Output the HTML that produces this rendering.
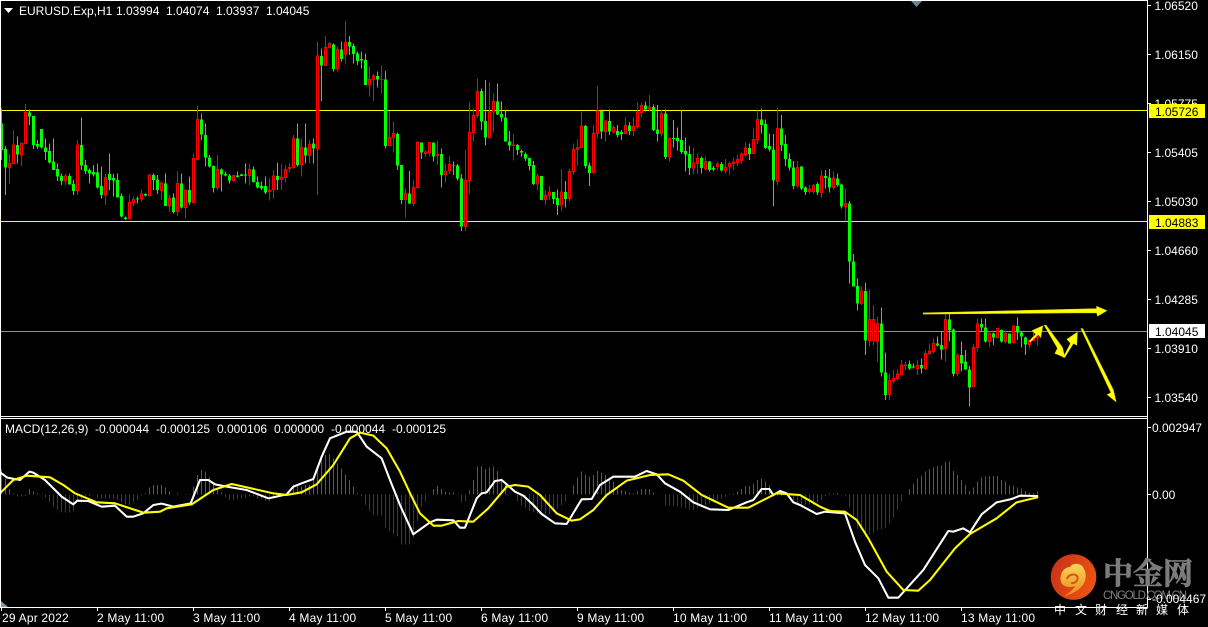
<!DOCTYPE html>
<html><head><meta charset="utf-8"><title>EURUSD.Exp,H1</title>
<style>
html,body{margin:0;padding:0;background:#000;width:1208px;height:627px;overflow:hidden}
svg{display:block;position:absolute;left:0;top:0}
text{font-family:"Liberation Sans",sans-serif;font-size:12px;fill:#fff}
.c{shape-rendering:crispEdges;fill:none}
.gw{stroke:#0f0;stroke-width:3}
.gb{stroke:#0f0;stroke-width:9}
.rw{stroke:#f00;stroke-width:3}
.rb{stroke:#f00;stroke-width:3;fill:#000}
.hr{stroke:#bb2748;stroke-width:3}
.hg{stroke:#0a5c0a;stroke-width:3}
.l{fill:none;stroke-width:6.200;stroke-linejoin:round;stroke-linecap:round}
</style></head><body>
<svg width="1208" height="627" viewBox="0 0 1208 627" xmlns="http://www.w3.org/2000/svg">
<defs>
<linearGradient id="cg" x1="0" y1="0" x2="1" y2="0.4"><stop offset="0" stop-color="#c42f18"/><stop offset="1" stop-color="#ea5210"/></linearGradient>
<linearGradient id="yg" x1="0" y1="0" x2="0" y2="1"><stop offset="0" stop-color="#f8d458"/><stop offset="1" stop-color="#ee8a1e"/></linearGradient>
</defs>
<rect width="1208" height="627" fill="#000"/>
<g class="c">
<path d="M1 110.5H1147" stroke="#ff0" stroke-width="1"/>
<path d="M1 221.5H1147" stroke="#ff0" stroke-width="1"/>
<path d="M1 331.5H1147" stroke="#909090" stroke-width="1"/>
</g>

<g transform="translate(0.167,0) scale(.33333)" class="c">
<path class="gw" d="M4 325V480M16 438V585M52 410V490M88 328V375M100 348V447M112 420V447M124 387V445M136 415V480M148 430V490M160 415V510M172 490V543M184 520V555M208 520V553M220 540V585M244 353V510M256 480V522M268 505V550M280 495V530M292 490V565M304 500V595M328 460V570M340 522V590M352 520V590M364 580V652M376 650V660M412 590V610M436 580V590M460 520V570M472 525V582M496 520V618M520 580V640M544 520V625M568 530V615M604 340V420M616 370V500M628 465V502M640 497V578M664 505V575M676 515V530M688 522V550M712 515V533M724 520V528M736 490V550M760 500V548M772 530V565M784 545V570M796 530V582M832 488V570M892 370V500M916 370V490M940 415V490M964 145V303M1000 130V215M1024 125V185M1048 108V165M1060 130V190M1072 155V195M1084 155V205M1096 160V255M1132 215V262M1156 213V445M1192 398V510"/>
<path class="gb" d="M4 370V450M16 447V503M52 435V463M88 337V350M100 348V435M112 432V440M124 387V442M136 442V456M148 453V488M160 485V510M172 507V530M184 528V543M208 528V553M220 552V573M244 435V497M256 495V513M268 510V520M280 516V523M292 518V562M304 558V585M328 522V540M340 534V542M352 540V592M364 588V650M376 652V657M412 595V599M436 582V586M460 525V540M472 538V570M496 550V618M520 592V636M544 550V623M568 570V608M604 358V404M616 405V473M628 472V500M640 498V564M664 508V524M676 522V527M688 526V542M712 526V531M724 524V528M736 524V527M760 508V546M772 546V562M784 558V565M796 558V578M832 528V540M892 415V495M916 442V467M940 430V446M964 168V197M1000 133V207M1024 148V177M1048 126V140M1060 138V162M1072 160V183M1084 177V182M1096 180V255M1132 228V238M1156 238V438M1192 402V497"/>
<path class="rw" d="M28 462V552M40 390V490M64 428V498M76 312V432M196 520V555M232 420V585M316 520V615M388 582V658M400 590V620M424 568V605M448 522V590M484 545V600M508 585V635M532 515V648M556 570V655M580 460V610M592 318V480M652 465V570M700 525V545M748 492V555M808 535V602M820 510V595M844 492V570M856 495V548M868 490V518M880 405V505M904 415V530M928 420V490M952 125V585M976 108V190M988 128V145M1012 140V215M1036 63V190M1108 200V290M1120 222V305M1144 198V280M1168 333V437M1180 365V458"/>
<path class="rb" d="M25 490H31V503H25ZM37 435H43V490H37ZM61 430H67V465H61ZM73 337H79V430H73ZM193 528H199V543H193ZM229 435H235V572H229ZM313 532H319V585H313ZM385 607H391V657H385ZM397 598H403V608H397ZM421 582H427V597H421ZM445 525H451V587H445ZM481 549H487V572H481ZM505 595H511V618H505ZM529 550H535V635H529ZM553 570H559V623H553ZM577 475H583V608H577ZM589 358H595V478H589ZM649 508H655V563H649ZM697 527H703V542H697ZM745 508H751V526H745ZM805 570H811V575H805ZM817 528H823V569H817ZM841 532H847V538H841ZM853 508H859V532H853ZM865 502H871V506H865ZM877 415H883V503H877ZM901 442H907V494H901ZM925 433H931V467H925ZM949 168H955V446H949ZM973 142H979V197H973ZM985 130H991V142H985ZM1009 148H1015V207H1009ZM1033 127H1039V162H1033ZM1105 238H1111V255H1105ZM1117 228H1123V238H1117ZM1141 238H1147V239H1141ZM1165 412H1171V437H1165ZM1177 400H1183V412H1177Z"/>
</g>

<g transform="translate(400.167,60) scale(.33333)" class="c">
<path class="gw" d="M4 315V432M28 333V432M64 247V297M100 247V305M124 265V383M160 305V345M172 312V362M184 342V513M244 85V210M256 60V257M292 70V165M304 125V185M316 150V245M328 213V272M352 252V285M364 268V290M376 277V303M388 292V332M400 303V375M424 348V420M460 396V432M472 388V465M496 363V442M556 195V325M568 308V378M604 148V237M628 148V225M652 195V233M664 210V240M688 186V225M736 124V155M760 133V213M772 135V245M796 148V297M820 180V262M832 202V272M844 150V282M856 232V335M868 258V345M904 290V340M928 303V335M940 318V333M964 306V334M1048 250V300M1084 145V220M1096 178V267M1108 220V275M1120 222V438M1144 165V273M1156 225V318M1168 280V332M1180 303V387"/>
<path class="gb" d="M4 315V420M28 400V430M64 247V278M100 247V290M124 282V345M160 315V317M172 316V356M184 355V500M244 93V185M256 183V233M292 124V164M304 162V173M316 172V245M328 244V257M352 255V270M364 273V278M376 282V296M388 294V318M400 315V372M424 348V420M460 396V417M472 414V435M496 396V417M556 198V318M568 316V339M604 153V215M628 183V215M652 213V225M664 216V222M688 196V213M736 136V148M760 141V210M772 208V222M796 160V291M820 234V237M832 234V243M844 240V276M856 273V284M868 282V324M904 294V324M928 304V330M940 324V329M964 312V332M1048 264V282M1084 178V195M1096 192V264M1108 258V268M1120 268V362M1144 205V255M1156 252V297M1168 297V323M1180 322V378"/>
<path class="rw" d="M16 385V473M40 360V438M52 243V385M76 270V290M88 247V290M112 243V315M136 310V368M148 288V342M196 270V513M208 126V400M220 145V245M232 55V172M268 66V235M280 100V218M340 222V302M412 340V392M436 392V435M448 378V420M484 327V453M508 325V425M520 250V345M532 237V318M544 155V265M580 197V340M592 78V232M616 180V245M640 197V220M676 172V222M700 172V228M712 128V205M724 127V172M748 105V155M784 150V230M808 232V305M880 262V342M892 280V342M916 290V332M952 305V332M976 297V340M988 305V345M1000 293V330M1012 285V318M1024 278V312M1036 246V290M1060 205V282M1072 152V252M1132 142V375M1192 303V383"/>
<path class="rb" d="M13 400H19V418H13ZM37 382H43V430H37ZM49 247H55V382H49ZM73 276H79V280H73ZM85 248H91V277H85ZM109 283H115V287H109ZM133 334H139V344H133ZM145 313H151V332H145ZM193 362H199V500H193ZM205 217H211V362H205ZM217 166H223V217H217ZM229 94H235V166H229ZM265 156H271V233H265ZM277 124H283V156H277ZM337 255H343V257H337ZM409 348H415V372H409ZM433 406H439V418H433ZM445 396H451V406H445ZM481 396H487V435H481ZM505 334H511V416H505ZM517 268H523V334H517ZM529 262H535V269H529ZM541 198H547V262H541ZM577 220H583V338H577ZM589 153H595V220H589ZM613 183H619V215H613ZM637 202H643V216H637ZM673 196H679V221H673ZM697 199H703V212H697ZM709 156H715V200H709ZM721 136H727V158H721ZM745 142H751V147H745ZM781 160H787V221H781ZM805 235H811V291H805ZM877 309H883V324H877ZM889 295H895V310H889ZM913 304H919V326H913ZM949 312H955V320H949ZM973 322H979V332H973ZM985 310H991V320H985ZM997 306H1003V311H997ZM1009 298H1015V308H1009ZM1021 282H1027V302H1021ZM1033 264H1039V284H1033ZM1057 238H1063V281H1057ZM1069 178H1075V240H1069ZM1129 205H1135V365H1129ZM1189 322H1195V378H1189Z"/>
</g>

<g transform="translate(800.167,90) scale(.33333)" class="c">
<path class="gw" d="M4 228V300M16 290V315M52 278V315M76 240V295M88 237V308M112 250V290M124 280V355M148 333V580M160 492V590M172 565V662M196 577V795M244 652V860M256 787V930M328 812V840M340 820V835M364 805V850M412 740V770M424 725V808M448 670V755M460 715V860M484 755V845M496 780V840M508 828V950M544 685V725M556 685V758M580 728V765M604 718V758M628 730V760M652 682V750M664 725V772M676 740V795"/>
<path class="gb" d="M4 230V295M16 292V306M52 282V308M76 258V264M88 262V293M112 265V285M124 283V350M148 340V515M160 514V590M172 588V640M196 603V752M244 700V848M256 847V915M328 822V836M340 830V833M364 825V836M412 760V767M424 765V778M448 688V720M460 718V852M484 795V820M496 815V838M508 838V892M544 702V712M556 712V755M580 730V743M604 720V755M628 730V760M652 708V727M664 727V740M676 742V764"/>
<path class="rw" d="M28 285V310M40 282V312M64 240V323M100 245V300M136 295V395M184 590V645M208 598V770M220 645V765M232 680V815M268 850V930M280 840V880M292 838V870M304 810V855M316 815V840M352 810V855M376 782V840M388 760V795M400 745V790M436 670V815M472 790V858M520 762V892M532 685V785M568 725V772M592 715V745M616 722V760M640 705V760M688 750V775M700 725V752M712 738V768"/>
<path class="rb" d="M25 297H31V305H25ZM37 286H43V305H37ZM61 258H67V308H61ZM97 264H103V292H97ZM133 340H139V350H133ZM181 603H187V640H181ZM205 688H211V752H205ZM217 688H223V752H217ZM229 700H235V755H229ZM265 872H271V914H265ZM277 865H283V873H277ZM289 852H295V866H289ZM301 825H307V853H301ZM313 825H319V827H313ZM349 826H355V835H349ZM373 790H379V835H373ZM385 783H391V790H385ZM397 760H403V785H397ZM433 688H439V775H433ZM469 795H475V850H469ZM517 772H523V890H517ZM529 702H535V772H529ZM565 730H571V755H565ZM589 716H595V742H589ZM613 730H619V755H613ZM637 708H643V757H637ZM685 752H691V764H685ZM697 742H703V752H697ZM709 738H715V744H709Z"/>
</g>

<!-- MACD histogram -->
<g transform="translate(0.167,415) scale(.33333)" class="c">
<path class="hr" d="M4 238V162M16 238V190M28 238V222M40 238V235M88 238V222M100 238V230M112 238V236M436 238V236M448 238V218M460 238V210M472 238V210M484 238V210M496 238V218M508 238V228M532 238V235M556 238V237M568 238V237M580 238V215M592 238V180M604 238V165M616 238V170M628 238V188M640 238V202M652 238V222M664 238V232M868 238V235M880 238V208M892 238V208M904 238V215M916 238V210M928 238V208M940 238V190M952 238V160M964 238V125M976 238V120M988 238V117M1000 238V130M1012 238V145M1024 238V160M1036 238V178M1048 238V195M1060 238V215M1072 238V236"/>
<path class="hg" d="M52 238V245M64 238V245M76 238V243M136 238V248M148 238V262M160 238V275M172 238V285M184 238V292M196 238V292M208 238V292M220 238V290M232 238V260M244 238V252M256 238V245M268 238V243M280 238V240M292 238V248M304 238V250M316 238V250M328 238V250M340 238V250M352 238V255M364 238V262M376 238V268M388 238V270M400 238V262M412 238V255M424 238V242M676 238V248M688 238V255M700 238V255M712 238V252M724 238V250M736 238V248M748 238V244M760 238V244M772 238V250M784 238V252M796 238V258M808 238V258M820 238V250M832 238V242M1084 238V245M1096 238V270M1108 238V288M1120 238V298M1132 238V302M1144 238V302M1156 238V338M1168 238V348M1180 238V358M1192 238V365"/>
</g>
<g transform="translate(400.167,415) scale(.33333)" class="c">
<path class="hr" d="M100 238V222M112 238V213M124 238V222M136 238V230M148 238V232M160 238V232M208 238V225M220 238V195M232 238V155M244 238V153M256 238V162M268 238V158M280 238V155M292 238V168M304 238V190M316 238V208M520 238V212M532 238V188M544 238V170M556 238V178M568 238V185M580 238V180M592 238V168M604 238V172M616 238V180M628 238V190M640 238V200M652 238V215M664 238V225M676 238V228M688 238V232M700 238V235M712 238V228M724 238V222M736 238V222M748 238V222M760 238V232M988 238V237M1000 238V236M1012 238V230M1024 238V222M1036 238V213M1048 238V213M1060 238V205M1072 238V195M1084 238V190M1096 238V200M1108 238V212M1120 238V235"/>
<path class="hg" d="M4 238V388M16 238V388M28 238V388M40 238V368M52 238V318M64 238V275M76 238V260M184 238V262M196 238V258M352 238V258M364 238V272M376 238V278M388 238V288M400 238V292M412 238V295M424 238V290M436 238V298M448 238V298M460 238V290M472 238V280M484 238V270M496 238V260M784 238V240M796 238V270M808 238V272M820 238V272M832 238V275M844 238V278M856 238V280M868 238V285M880 238V285M892 238V280M904 238V278M916 238V272M928 238V265M940 238V262M952 238V255M964 238V250M976 238V245M1132 238V245M1144 238V243M1156 238V240M1168 238V248M1180 238V262M1192 238V270"/>
</g>
<g transform="translate(800.167,415) scale(.33333)" class="c">
<path class="hr" d="M88 238V236M100 238V236M112 238V234M124 238V237M328 238V222M340 238V205M352 238V190M364 238V182M376 238V170M388 238V162M400 238V157M412 238V153M424 238V152M436 238V141M448 238V140M460 238V168M472 238V180M484 238V195M496 238V210M508 238V228M520 238V218M532 238V200M544 238V188M556 238V185M568 238V183M580 238V183M592 238V183M604 238V195M616 238V200M628 238V212M640 238V212M652 238V217M664 238V220M676 238V228M688 238V233M700 238V234M712 238V230"/>
<path class="hg" d="M4 238V270M16 238V270M28 238V268M40 238V270M52 238V262M64 238V255M76 238V245M136 238V245M148 238V278M160 238V310M172 238V340M184 238V345M196 238V368M208 238V358M220 238V352M232 238V345M244 238V342M256 238V338M268 238V325M280 238V308M292 238V285M304 238V260"/>
</g>

<!-- MACD text -->
<text x="5" y="433">MACD(12,26,9)</text>
<text x="95" y="433">-0.000044</text>
<text x="156" y="433">-0.000125</text>
<text x="217" y="433">0.000106</text>
<text x="274" y="433">0.000000</text>
<text x="331" y="433">-0.000044</text>
<text x="392" y="433">-0.000125</text>

<!-- MACD lines -->
<g transform="scale(.33333) translate(0,1245)">
<polyline class="l" stroke="#fff" points="0,172 22,188 60,195 88,170 100,173 135,195 185,245 220,268 232,257 265,258 305,275 345,272 380,305 400,305 430,295 460,270 485,266 520,275 572,265 600,195 625,195 645,208 680,215 740,225 805,250 860,238 880,215 905,205 940,192 965,125 990,70 1040,50 1070,50 1100,95 1145,130 1170,195 1200,270 1240,358 1290,322 1310,314 1360,316 1380,338 1395,338 1430,250 1445,235 1460,232 1485,198 1505,195 1545,230 1570,242 1600,270 1625,297 1665,325 1700,327 1745,253 1775,252 1800,210 1840,185 1905,185 1940,168 1970,178 1995,205 2040,230 2080,262 2130,283 2185,285 2240,262 2260,255 2285,222 2308,222 2320,240 2340,228 2360,235 2380,262 2400,270 2450,297 2475,290 2535,295 2565,380 2595,450 2635,490 2665,548 2695,548 2770,465 2845,348 2860,350 2890,340 2910,352 2945,298 2990,262 3035,252 3060,242 3112,243"/>
<polyline class="l" stroke="#ff0" points="0,235 40,195 80,182 150,187 190,210 225,235 290,262 345,265 430,293 480,290 500,280 575,268 640,225 695,207 820,235 860,240 905,232 950,208 1000,150 1050,70 1080,53 1120,62 1160,100 1200,170 1235,245 1260,295 1300,332 1325,332 1375,318 1420,320 1465,280 1520,215 1545,210 1585,215 1620,240 1670,295 1715,317 1740,313 1780,285 1820,240 1880,197 1950,180 2005,178 2050,197 2105,240 2185,278 2245,278 2330,235 2400,240 2460,275 2490,288 2535,290 2570,315 2605,370 2660,470 2710,525 2755,527 2790,495 2865,400 2910,357 2990,310 3050,262 3112,247"/>
</g>

<!-- arrows -->
<g transform="translate(800,90) scale(.33333)" fill="#ff0" stroke="#e6e600" stroke-width="2">
<polygon points="370,669 890,656 890,649 920,662 893,678 890,668 370,672"/>
<polygon points="688,753 708,733 697,722 728,708 722,742 715,733 691,756"/>
<polygon points="733,706 738,706 787,772 794,802 765,790 773,775"/>
<polygon points="790,802 812,760 801,748 832,727 830,765 820,760 794,802"/>
<polygon points="843,716 848,716 940,900 948,935 922,914 933,908"/>
</g>

<!-- frames -->
<g class="c" stroke="#fff" stroke-width="1">
<path d="M0 .5H1148M.5 0V607M1147.5 0V607M0 416.5H1148M0 418.5H1148M0 607.5H1148"/>
<path d="M1148 5.500H1151M1148 54.500H1151M1148 103.500H1151M1148 152.500H1151M1148 201.500H1151M1148 250.500H1151M1148 299.500H1151M1148 348.500H1151M1148 397.500H1151M1148 427.500H1151M1148 494.500H1151M1148 599.500H1151"/>
<path d="M1.500 608V611M97.500 608V611M193.500 608V611M289.500 608V611M385.500 608V611M481.500 608V611M577.500 608V611M673.500 608V611M769.500 608V611M865.500 608V611M961.500 608V611"/>
</g>
<polygon points="1,601 1,607 8,607" fill="#8899aa"/>
<polygon points="911,1 922,1 916.5,7" fill="#708090"/>
<polygon points="4,8 13,8 8.500,13" fill="#fff"/>

<!-- header -->
<text x="19" y="15">EURUSD.Exp,H1</text>
<text x="116" y="15">1.03994</text>
<text x="166" y="15">1.04074</text>
<text x="216" y="15">1.03937</text>
<text x="266" y="15">1.04045</text>

<!-- price axis -->
<text x="1154.500" y="10">1.06520</text>
<text x="1154.500" y="59">1.06150</text>
<text x="1154.500" y="108">1.05775</text>
<text x="1154.500" y="157">1.05405</text>
<text x="1154.500" y="206">1.05030</text>
<text x="1154.500" y="255">1.04660</text>
<text x="1154.500" y="304">1.04285</text>
<text x="1154.500" y="353">1.03910</text>
<text x="1154.500" y="402">1.03540</text>
<rect x="1149" y="104" width="56" height="14" fill="#ff0"/>
<text x="1155" y="116" style="fill:#000">1.05726</text>
<rect x="1149" y="215" width="56" height="14" fill="#ff0"/>
<text x="1155" y="227" style="fill:#000">1.04883</text>
<rect x="1149" y="324" width="56" height="14" fill="#fff"/>
<text x="1155" y="336" style="fill:#000">1.04045</text>
<text x="1152" y="432">0.002947</text>
<text x="1152" y="499">0.00</text>

<!-- time axis -->
<g style="letter-spacing:.2px">
<text x="2" y="622">29 Apr 2022</text>
<text x="97" y="622">2 May 11:00</text>
<text x="193" y="622">3 May 11:00</text>
<text x="289" y="622">4 May 11:00</text>
<text x="385" y="622">5 May 11:00</text>
<text x="481" y="622">6 May 11:00</text>
<text x="577" y="622">9 May 11:00</text>
<text x="673" y="622">10 May 11:00</text>
<text x="769" y="622">11 May 11:00</text>
<text x="865" y="622">12 May 11:00</text>
<text x="961" y="622">13 May 11:00</text>
</g>

<!-- logo -->
<circle cx="1073.500" cy="577" r="22.800" fill="url(#cg)"/>
<path d="M1061 582c-2-8 3-15 9-15c3-5 12-4 14 2c3 5 2 13-2 17c-5 6-13 9-18 10c5-3 9-6 11-10c-6 2-12 1-14-4z" fill="url(#yg)"/>
<path d="M1067 579c1-4 7-6 10-3c2 3-1 8-6 7" fill="none" stroke="#d9541c" stroke-width="2"/>
<text x="1103" y="584" style="font-family:'Liberation Serif','Noto Serif CJK SC',serif;font-size:30px;font-weight:700;fill:#7c7c7c;stroke:#7c7c7c;stroke-width:.7px">中金网</text>
<text x="1103" y="599" textLength="84" lengthAdjust="spacing" style="font-size:11.500px;fill:#808080">CNGOLD.COM.CN</text>
<text x="1152" y="603">-0.004467</text>
<g style="font-family:'Liberation Sans','Noto Sans CJK SC',sans-serif;font-size:13px;fill:#8a8a8a">
<text x="1054" y="614">中</text><text x="1075" y="614">文</text><text x="1095" y="614">财</text><text x="1116" y="614">经</text><text x="1136" y="614">新</text><text x="1156" y="614">媒</text><text x="1177" y="614">体</text>
</g>
</svg>
</body></html>
